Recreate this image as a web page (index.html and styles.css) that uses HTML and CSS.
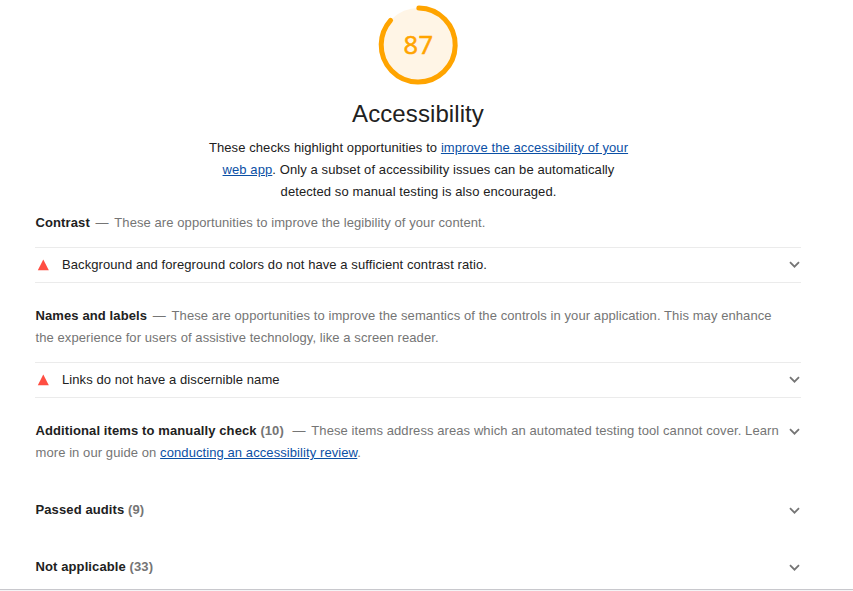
FILE: index.html
```html
<!DOCTYPE html>
<html lang="en">
<head>
<meta charset="utf-8">
<title>Accessibility</title>
<link rel="stylesheet" href="styles.css">
</head>
<body>
<main class="report">
  <header class="head">
    <svg class="gauge" viewBox="0 0 80 80">
      <circle class="gauge-base" cx="40.200" cy="40" r="37"/>
      <circle class="gauge-arc" cx="40.200" cy="40" r="37" pathLength="100" stroke-dasharray="86.3 100" transform="rotate(-89 40.2 40)"/>
      <text class="gauge-text" x="40.500" y="49" text-anchor="middle">87</text>
    </svg>
    <h1>Accessibility</h1>
    <p class="intro">These checks highlight opportunities to <a href="#">improve the accessibility of your<br>web app</a>. Only a subset of accessibility issues can be automatically<br>detected so manual testing is also encouraged.</p>
  </header>

  <section class="group">
    <p class="desc"><b>Contrast</b><span class="dash"> — </span>These are opportunities to improve the legibility of your content.</p>
    <div class="audit">
      <svg class="warn" viewBox="0 0 12 12"><path d="M6.300 0.500 11.800 11.200H.8z"/></svg>
      <span class="title">Background and foreground colors do not have a sufficient contrast ratio.</span>
      <svg class="chev" viewBox="0 0 12 8"><path d="M1 1.200 5.500 5.700l4.500-4.500"/></svg>
    </div>
  </section>

  <section class="group">
    <p class="desc"><b>Names and labels</b><span class="dash"> — </span>These are opportunities to improve the semantics of the controls in your application. This may enhance<br>the experience for users of assistive technology, like a screen reader.</p>
    <div class="audit">
      <svg class="warn" viewBox="0 0 12 12"><path d="M6.300 0.500 11.800 11.200H.8z"/></svg>
      <span class="title">Links do not have a discernible name</span>
      <svg class="chev" viewBox="0 0 12 8"><path d="M1 1.200 5.500 5.700l4.500-4.500"/></svg>
    </div>
  </section>

  <section class="clump">
    <p class="desc"><b>Additional items to manually check</b> <span class="count">(10)</span><span class="dash wide"> — </span>These items address areas which an automated testing tool cannot cover. Learn<br>more in our guide on <a href="#">conducting an accessibility review</a>.</p>
    <svg class="chev" viewBox="0 0 12 8"><path d="M1 1.200 5.500 5.700l4.500-4.500"/></svg>
  </section>
  <section class="clump">
    <p class="desc"><b>Passed audits</b> <span class="count">(9)</span></p>
    <svg class="chev" viewBox="0 0 12 8"><path d="M1 1.200 5.500 5.700l4.500-4.500"/></svg>
  </section>
  <section class="clump">
    <p class="desc"><b>Not applicable</b> <span class="count">(33)</span></p>
    <svg class="chev" viewBox="0 0 12 8"><path d="M1 1.200 5.500 5.700l4.500-4.500"/></svg>
  </section>
</main>
</body>
</html>
```
FILE: styles.css
```css
* { box-sizing: border-box; }
body {
  margin: 0;
  background: #f4f4f6;
  color: #212121;
  font: 13px/22px "Liberation Sans", Arial, sans-serif;
  letter-spacing: 0.083px;
}
.report {
  height: 590px;
  padding: 5px 52px 0 35px;
  background: #fff;
  border-bottom: 1px solid #c8c8cd;
  overflow: hidden;
}
.head { text-align: center; }
.gauge { display: block; width: 80px; height: 80px; margin: 0 auto; overflow: visible; }
.gauge-base { fill: #fff5e6; }
.gauge-arc { fill: none; stroke: #ffa400; stroke-width: 5; stroke-linecap: round; }
.gauge-text {
  fill: #ffa400;
  stroke: #ffa400;
  stroke-width: 0.6;
  font: 400 25.5px "Open Sans", sans-serif;
  letter-spacing: 0.5px;
}
h1 { margin: 13px 0 7px; font-size: 24px; font-weight: 400; line-height: 32px; }
p { margin: 0; }
a { color: #0b50a5; text-decoration: underline; }
.group { margin-bottom: 22px; }
.desc { padding-left: 0.5px; color: #757575; white-space: nowrap; }
.intro { padding-left: 1px; margin-bottom: 9px; letter-spacing: 0.09px; white-space: nowrap; }
b { color: #212121; letter-spacing: 0.11px; }
.dash { margin: 0 2px; }
.wide { margin-left: 5px; }
.count { font-weight: 700; }
.audit {
  display: flex;
  align-items: center;
  height: 36px;
  margin-top: 13px;
  border: solid #ebebeb;
  border-width: 1px 0;
}
.warn { width: 12px; height: 12px; margin: 0 13px 0 2px; fill: #ff4e42; }
.title { flex: 1; }
.chev { flex: none; width: 12px; height: 8px; fill: none; stroke: #757575; stroke-width: 1.8; }
.clump { display: flex; justify-content: space-between; margin-bottom: 35px; }
.clump .chev { margin-top: 8px; }
```
